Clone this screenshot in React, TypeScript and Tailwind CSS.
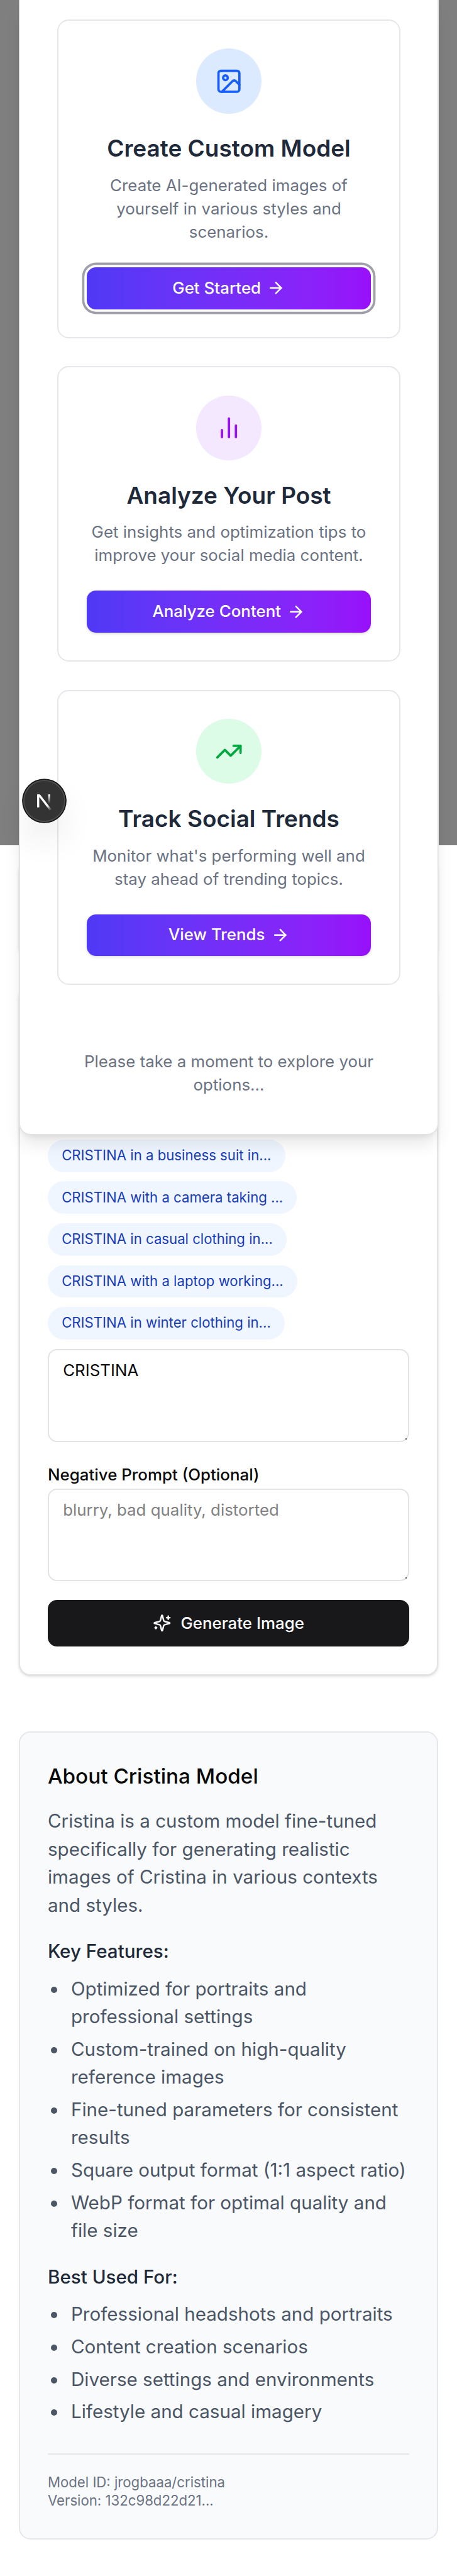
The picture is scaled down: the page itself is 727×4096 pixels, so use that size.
import React from "react";
import { ArrowRight, Image as ImageIcon } from "lucide-react";

type Option = {
  title: string;
  description: string;
  action: string;
  badge: string;
  icon: React.ReactNode;
  focused?: boolean;
};

const iconProps = {
  viewBox: "0 0 24 24",
  fill: "none",
  stroke: "currentColor",
  strokeWidth: 2,
  strokeLinecap: "round" as const,
  strokeLinejoin: "round" as const,
};

function BarsIcon() {
  return (
    <svg {...iconProps} className="size-6 text-[#9810fa]">
      <path d="M18 20V10" />
      <path d="M12 20V4" />
      <path d="M6 20v-6" />
    </svg>
  );
}

function TrendIcon() {
  return (
    <svg {...iconProps} className="size-6 text-[#00a63e]">
      <path d="M22 7 13.5 15.5l-5-5L2 17" />
      <path d="M16 7h6v6" />
    </svg>
  );
}

function SparklesIcon() {
  return (
    <svg {...iconProps} className="size-4">
      <path d="M9.937 15.5A2 2 0 0 0 8.5 14.063l-6.135-1.582a.5.5 0 0 1 0-.962L8.5 9.936A2 2 0 0 0 9.937 8.5l1.582-6.135a.5.5 0 0 1 .963 0L14.063 8.5A2 2 0 0 0 15.5 9.937l6.135 1.581a.5.5 0 0 1 0 .964L15.5 14.063a2 2 0 0 0-1.437 1.437l-1.582 6.135a.5.5 0 0 1-.963 0z" />
      <path d="M20 3v4" />
      <path d="M22 5h-4" />
      <path d="M4 17v2" />
      <path d="M5 18H3" />
    </svg>
  );
}

const options: Option[] = [
  {
    title: "Create Custom Model",
    description: "Create AI-generated images of yourself in various styles and scenarios.",
    action: "Get Started",
    badge: "bg-[#dbeafe]",
    icon: <ImageIcon className="size-6 text-[#155dfc]" />,
    focused: true,
  },
  {
    title: "Analyze Your Post",
    description: "Get insights and optimization tips to improve your social media content.",
    action: "Analyze Content",
    badge: "bg-[#f3e8ff]",
    icon: <BarsIcon />,
  },
  {
    title: "Track Social Trends",
    description: "Monitor what's performing well and stay ahead of trending topics.",
    action: "View Trends",
    badge: "bg-[#dcfce7]",
    icon: <TrendIcon />,
  },
];

const prompts = [
  "CRISTINA in a business suit in...",
  "CRISTINA with a camera taking ...",
  "CRISTINA in casual clothing in...",
  "CRISTINA with a laptop working...",
  "CRISTINA in winter clothing in...",
];

const features = [
  "Optimized for portraits and professional settings",
  "Custom-trained on high-quality reference images",
  "Fine-tuned parameters for consistent results",
  "Square output format (1:1 aspect ratio)",
  "WebP format for optimal quality and file size",
];

const uses = [
  "Professional headshots and portraits",
  "Content creation scenarios",
  "Diverse settings and environments",
  "Lifestyle and casual imagery",
];

function OptionCard({ option }: { option: Option }) {
  return (
    <div className="flex flex-col items-center rounded-lg border-2 border-[#e5e7eb] bg-white px-6 py-6 text-center">
      <div className={`flex size-14 items-center justify-center rounded-full ${option.badge}`}>{option.icon}</div>
      <h3 className="mt-4 text-xl font-semibold text-[#1e2939]">{option.title}</h3>
      <p className="mt-2 text-sm text-[#6a7282]">{option.description}</p>
      <button
        className={`mt-5 flex h-9 w-full items-center justify-center gap-[9px] rounded-md bg-linear-to-r from-[#4f39f6] to-[#9810fa] text-sm font-medium text-white ${
          option.focused
            ? "shadow-[0_0_0_3.7px_#fff,0_0_0_7.4px_#9f9fa9]"
            : "shadow-[0_1.85px_5.55px_0_rgba(0,0,0,0.1),0_1.85px_3.7px_-1.85px_rgba(0,0,0,0.1)]"
        }`}
      >
        {option.action}
        <ArrowRight className="size-4" />
      </button>
    </div>
  );
}

function WelcomeDialog() {
  return (
    <div className="absolute top-0 left-[30px] z-20 flex w-[668px] flex-col rounded-b-lg border-2 border-t-0 border-[#e4e4e7] bg-white px-8 pt-[31px] pb-8 shadow-[0_18.5px_27.7px_-5.5px_rgba(0,0,0,0.1),0_7.4px_11.1px_-7.4px_rgba(0,0,0,0.1)]">
      <div className="flex flex-col gap-6">
        {options.map((option) => (
          <OptionCard key={option.title} option={option} />
        ))}
      </div>
      <p className="mt-14 text-center text-sm text-[#6a7282]">Please take a moment to explore your options...</p>
    </div>
  );
}

function DevBadge() {
  return (
    <div className="absolute top-[1240px] left-[37px] z-30 size-9 rounded-full bg-[#333] shadow-[0_0_0_1.85px_#171717,inset_0_0_0_1.85px_rgba(255,255,255,0.14),0_29.6px_59.2px_-14.8px_rgba(0,0,0,0.24)]">
      <svg viewBox="0 0 36 36" fill="none" className="size-full">
        <defs>
          <linearGradient id="diagonal" x1="9.956" y1="11.123" x2="15.478" y2="17.967" gradientUnits="userSpaceOnUse">
            <stop stopColor="white" />
            <stop offset="0.604" stopColor="white" stopOpacity="0" />
          </linearGradient>
          <linearGradient id="upright" x1="11.822" y1="1.4" x2="11.791" y2="9.625" gradientUnits="userSpaceOnUse">
            <stop stopColor="white" />
            <stop offset="1" stopColor="white" stopOpacity="0" />
          </linearGradient>
        </defs>
        <g transform="translate(10.5 11)">
          <path d="M13.3 15.2 2.34 1v11.6" stroke="url(#diagonal)" strokeWidth="1.86" />
          <rect x="0.8" y="-2.2" width="4" height="3.7" fill="#333" />
          <path d="M1.6 0.2h1" stroke="#777" strokeWidth="0.4" />
          <path d="M11.825 1.5v11.6" stroke="url(#upright)" strokeWidth="1.86" />
        </g>
      </svg>
    </div>
  );
}

function PromptField({ value, placeholder }: { value?: string; placeholder?: string }) {
  return (
    <div className="relative flex">
      <textarea
        defaultValue={value}
        placeholder={placeholder}
        className="h-20 w-full resize-none overflow-hidden rounded-md border-2 border-[#e4e4e7] bg-white px-3 py-2 text-sm text-[#0a0a0a] placeholder:text-[#808080]"
      />
      <span className="absolute right-[4px] bottom-[4px] size-[2px] bg-[#555]" />
    </div>
  );
}

function GeneratorCard() {
  return (
    <section className="flex flex-col rounded-lg border-2 border-[#e4e4e7] bg-white px-6 pt-[242px] pb-6 shadow-[0_1.85px_5.55px_0_rgba(0,0,0,0.1),0_1.85px_3.7px_-1.85px_rgba(0,0,0,0.1)]">
      <div className="mb-2 flex flex-col items-start gap-2">
        {prompts.map((prompt) => (
          <button key={prompt} className="rounded-full bg-[#eff6ff] px-3 py-1.5 text-xs text-[#193cb8]">
            {prompt}
          </button>
        ))}
      </div>
      <PromptField value="CRISTINA" />
      <label className="mt-4 flex h-6 items-center pt-[3px] text-sm font-medium text-[#0a0a0a]">
        Negative Prompt (Optional)
      </label>
      <PromptField placeholder="blurry, bad quality, distorted" />
      <button className="mt-4 flex h-10 items-center justify-center gap-2 rounded-md bg-[#18181b] text-sm font-medium text-[#fafafa]">
        <SparklesIcon />
        Generate Image
      </button>
    </section>
  );
}

function BulletList({ title, items }: { title: string; items: string[] }) {
  return (
    <div className="mt-4">
      <h4 className="text-base font-medium text-[#1e2939]">{title}</h4>
      <ul className="mt-2 flex flex-col gap-1 text-base text-[#4a5565]">
        {items.map((item) => (
          <li key={item} className="flex">
            <span className="mt-[19px] mr-[22px] ml-[5px] size-[10px] shrink-0 rounded-full bg-[#4a5565]" />
            <span>{item}</span>
          </li>
        ))}
      </ul>
    </div>
  );
}

function AboutCard() {
  return (
    <section className="mt-12 flex flex-col rounded-lg border-2 border-[#e5e7eb] bg-[#f9fafb] p-6">
      <h2 className="text-lg font-medium text-[#0a0a0a]">About Cristina Model</h2>
      <p className="mt-3 text-base text-[#4a5565]">
        Cristina is a custom model fine-tuned specifically for generating realistic images of Cristina in various
        contexts and styles.
      </p>
      <BulletList title="Key Features:" items={features} />
      <BulletList title="Best Used For:" items={uses} />
      <div className="mt-6 border-t-2 border-[#e5e7eb] pt-4 text-xs text-[#6a7282]">
        <p>Model ID: jrogbaaa/cristina</p>
        <p>Version: 132c98d22d21...</p>
      </div>
    </section>
  );
}

export default function App() {
  return (
    <div className="relative h-[4096px] w-[727px] overflow-hidden bg-white font-['Inter',sans-serif] antialiased [--radius-lg:18.5px] [--radius-md:14.8px] [--spacing:7.396px] [--text-base:29.584px] [--text-lg:33.282px] [--text-sm:25.886px] [--text-xl:36.98px] [--text-xs:22.188px]">
      <main className="flex flex-col px-4 pt-185">
        <section className="mb-6 h-21 rounded-lg border-2 border-[#e4e4e7] bg-white shadow-[0_1.85px_5.55px_0_rgba(0,0,0,0.1),0_1.85px_3.7px_-1.85px_rgba(0,0,0,0.1)]" />
        <GeneratorCard />
        <AboutCard />
      </main>
      <div className="absolute inset-x-0 top-0 z-10 h-[1344px] bg-black/50" />
      <WelcomeDialog />
      <DevBadge />
    </div>
  );
}
